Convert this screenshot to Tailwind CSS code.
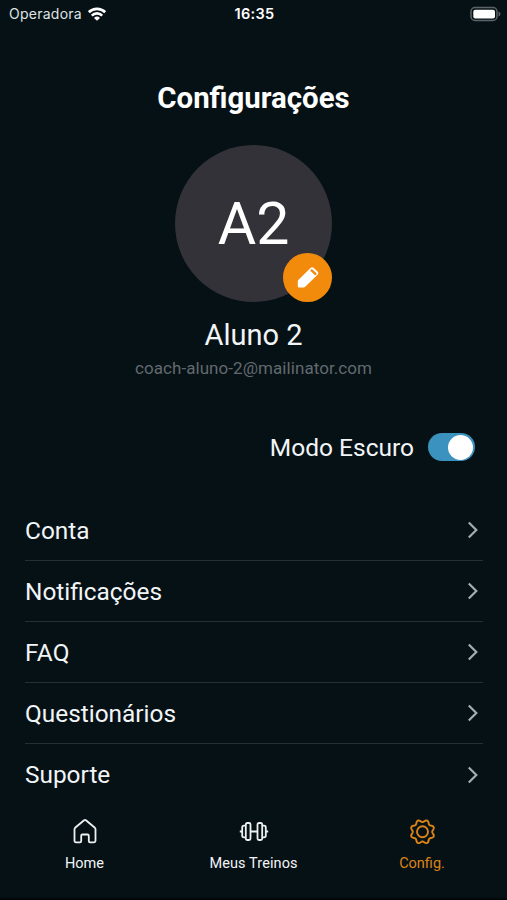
<!DOCTYPE html>
<html lang="pt-BR">
<head>
<meta charset="utf-8">
<title>Configurações</title>
<script src="https://cdn.jsdelivr.net/npm/@tailwindcss/browser@4"></script>
</head>
<body class="bg-[#061116] font-['Roboto',sans-serif] text-[#f2f5f6]">
<div class="flex h-[900px] w-[507px] flex-col overflow-hidden">
  <header class="grid h-7 grid-cols-3 items-center pl-[9px] pr-[6px] font-['Inter',sans-serif] text-[13px] leading-7 text-[#dfe3e4]">
    <div class="flex items-center gap-[6px]">
      <span class="text-[14px] tracking-[0.25px]">Operadora</span>
      <svg class="-mt-px h-[14px] w-[18px]" viewBox="0 0 18 14" fill="none" stroke="#fff" stroke-width="2.7"><path d="M.8 5.2a11.8 11.8 0 0 1 16.4 0M3.8 8.6a7.4 7.4 0 0 1 10.4 0"/><path d="M9 13.8 6 10.9a4.4 4.4 0 0 1 6 0z" fill="#fff" stroke="none"/></svg>
    </div>
    <span class="-ml-px text-center text-[14.5px] font-semibold tracking-[0.3px] text-white">16:35</span>
    <svg class="-mt-px h-4 w-[31px] justify-self-end" viewBox="0 0 31 16"><rect x="1" y="1.5" width="26" height="13" rx="4" fill="none" stroke="#5c6467" stroke-width="1.5"/><rect x="3.3" y="3.7" width="21.7" height="8.8" rx="2" fill="#fff"/><path d="M28.5 5.5q2 .6 2 2.5t-2 2.5z" fill="#5c6467"/></svg>
  </header>
  <main class="flex flex-col">
    <h1 class="mt-[52px] text-center text-[29.4px] font-bold leading-[36px] text-white">Configurações</h1>
    <div class="relative mx-auto mt-[29px] flex size-[157px] items-center justify-center rounded-full bg-[#333238]">
      <span class="text-[59px] leading-none text-white">A2</span>
      <button class="absolute right-0 bottom-0 flex size-[49px] items-center justify-center rounded-full bg-[#f28b0c]">
        <svg class="-mt-px size-6" viewBox="0 0 24 24"><path d="M2 15.2 14.8 2.8q1.4-1.2 2.8 0l4.2 3.9q1.2 1.3 0 2.7L9.2 21.8q-.7.6-1.6.6H3q-1.2 0-1.2-1.2v-4.8q0-.8.2-1.2z" fill="#fff"/><path d="m15.6 5.4 3.8 3.5" stroke="#f28b0c" stroke-width="2.4" stroke-linecap="round"/></svg>
      </button>
    </div>
    <p class="mt-[15px] text-center text-[29px] leading-9">Aluno 2</p>
    <p class="mt-[3px] text-center text-[17px] leading-6 tracking-[0.07px] text-[#62696e]">coach-aluno-2@mailinator.com</p>
    <div class="mt-[53px] flex h-7 items-center justify-end gap-[14px] pr-8">
      <span class="pt-px text-[24.5px] leading-7">Modo Escuro</span>
      <span class="flex h-7 w-[47px] items-center justify-end rounded-full bg-[#3c92be] pr-[2px]"><span class="size-[25px] rounded-full bg-white"></span></span>
    </div>
    <ul class="mt-[39px] ml-[25px] mr-6 text-[24.4px] leading-8">
      <li class="flex h-[61px] items-center justify-between border-b border-[#243034] pt-px pr-1"><span>Conta</span><svg class="-mt-px h-5 w-3" viewBox="0 0 12 20" fill="none" stroke="#a4aeac" stroke-width="2.2"><path d="m1.8 2.5 7.5 7.5-7.5 7.5"/></svg></li>
      <li class="flex h-[61px] items-center justify-between border-b border-[#243034] pt-px pr-1"><span>Notificações</span><svg class="-mt-px h-5 w-3" viewBox="0 0 12 20" fill="none" stroke="#a4aeac" stroke-width="2.2"><path d="m1.8 2.5 7.5 7.5-7.5 7.5"/></svg></li>
      <li class="flex h-[61px] items-center justify-between border-b border-[#243034] pt-px pr-1"><span class="tracking-[0.3px]">FAQ</span><svg class="-mt-px h-5 w-3" viewBox="0 0 12 20" fill="none" stroke="#a4aeac" stroke-width="2.2"><path d="m1.8 2.5 7.5 7.5-7.5 7.5"/></svg></li>
      <li class="flex h-[61px] items-center justify-between border-b border-[#243034] pt-px pr-1"><span>Questionários</span><svg class="-mt-px h-5 w-3" viewBox="0 0 12 20" fill="none" stroke="#a4aeac" stroke-width="2.2"><path d="m1.8 2.5 7.5 7.5-7.5 7.5"/></svg></li>
      <li class="flex h-[61px] items-center justify-between pr-1"><span>Suporte</span><svg class="h-5 w-3" viewBox="0 0 12 20" fill="none" stroke="#a4aeac" stroke-width="2.2"><path d="m1.8 2.5 7.5 7.5-7.5 7.5"/></svg></li>
    </ul>
  </main>
  <nav class="mt-auto grid h-[95px] grid-cols-3 border-b-2 border-[#02070a] pt-[12px] text-center text-[14.5px] leading-5">
    <a class="flex flex-col items-center gap-[7px]"><svg class="h-[30px] w-7" viewBox="0 0 28 30" fill="none" stroke="#eef1f1" stroke-width="1.8" stroke-linejoin="round"><path d="M3.5 12.2q0-.8.6-1.4l9-7.6q.9-.7 1.8 0l9 7.6q.6.6.6 1.4v11.6q0 1.5-1.5 1.5h-4q-1.2 0-1.2-1.3v-5.3q0-1.2-1.2-1.2h-5.2q-1.2 0-1.2 1.2v5.3q0 1.3-1.2 1.3H5q-1.5 0-1.5-1.5z"/></svg><span>Home</span></a>
    <a class="flex flex-col items-center gap-[7px]"><svg class="h-[30px] w-[30px]" viewBox="0 0 30 30" fill="none" stroke="#eef1f1" stroke-width="1.8"><rect x="6.8" y="6" width="4.7" height="17" rx="1.5"/><rect x="18.5" y="6" width="4.7" height="17" rx="1.5"/><path d="M6.8 8.7H5q-1.8 0-1.8 1.8v8q0 1.8 1.8 1.8h1.8M23.2 8.7H25q1.8 0 1.8 1.8v8q0 1.8-1.8 1.8h-1.8M11.5 14.5h7M.8 14.5h2.4M26.8 14.5h2.4"/></svg><span class="tracking-[0.1px]">Meus Treinos</span></a>
    <a class="flex flex-col items-center gap-[7px] text-[#dc8416]"><svg class="size-[30px]" viewBox="0 0 30 30" fill="none" stroke="currentColor" stroke-width="1.9"><path id="gear" stroke-linejoin="round"/><circle cx="14.5" cy="14.8" r="5.5"/></svg><span class="-ml-px">Config.</span></a>
  </nav>
</div>
<script>
  // Eight-lobed gear outline
  const points = [];
  for (let i = 0; i < 160; i++) {
    const a = i * Math.PI / 80;
    const r = 10.9 - 1.2 * Math.cos(8 * a);
    points.push((14.5 + r * Math.cos(a)).toFixed(2) + ' ' + (14.8 + r * Math.sin(a)).toFixed(2));
  }
  document.getElementById('gear').setAttribute('d', 'M' + points.join('L') + 'Z');
</script>
</body>
</html>
